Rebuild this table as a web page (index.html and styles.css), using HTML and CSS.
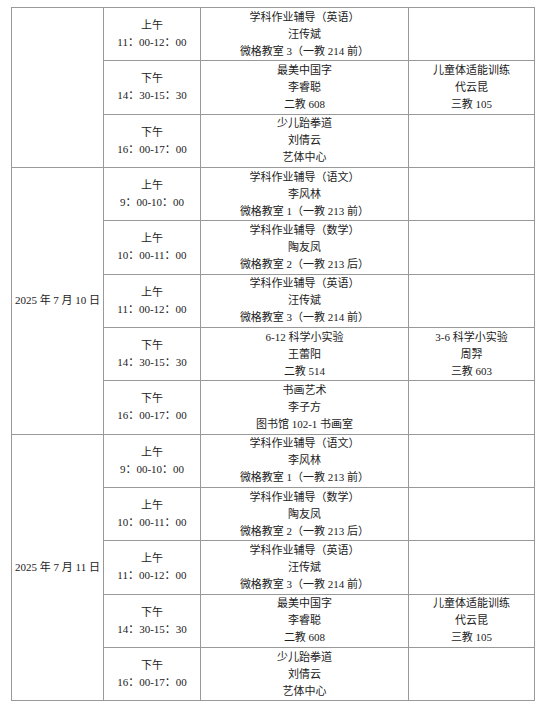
FILE: index.html
```html
<!DOCTYPE html>
<html lang="zh-CN">
<head>
<meta charset="utf-8">
<link rel="stylesheet" href="styles.css">
</head>
<body>
<table class="schedule">
  <colgroup>
    <col class="c-date"><col class="c-time"><col class="c-course"><col class="c-course2">
  </colgroup>
  <tbody>
    <tr>
      <td rowspan="3"></td>
      <td>上午<br>11：00-12：00</td>
      <td>学科作业辅导（英语）<br>汪传斌<br>微格教室 3（一教 214 前）</td>
      <td></td>
    </tr>
    <tr>
      <td>下午<br>14：30-15：30</td>
      <td>最美中国字<br>李睿聪<br>二教 608</td>
      <td>儿童体适能训练<br>代云昆<br>三教 105</td>
    </tr>
    <tr>
      <td>下午<br>16：00-17：00</td>
      <td>少儿跆拳道<br>刘倩云<br>艺体中心</td>
      <td></td>
    </tr>

    <tr>
      <td rowspan="5">2025 年 7 月 10 日</td>
      <td>上午<br>9：00-10：00</td>
      <td>学科作业辅导（语文）<br>李风林<br>微格教室 1（一教 213 前）</td>
      <td></td>
    </tr>
    <tr>
      <td>上午<br>10：00-11：00</td>
      <td>学科作业辅导（数学）<br>陶友凤<br>微格教室 2（一教 213 后）</td>
      <td></td>
    </tr>
    <tr>
      <td>上午<br>11：00-12：00</td>
      <td>学科作业辅导（英语）<br>汪传斌<br>微格教室 3（一教 214 前）</td>
      <td></td>
    </tr>
    <tr>
      <td>下午<br>14：30-15：30</td>
      <td>6-12 科学小实验<br>王蕾阳<br>二教 514</td>
      <td>3-6 科学小实验<br>周羿<br>三教 603</td>
    </tr>
    <tr>
      <td>下午<br>16：00-17：00</td>
      <td>书画艺术<br>李子方<br>图书馆 102-1 书画室</td>
      <td></td>
    </tr>

    <tr>
      <td rowspan="5">2025 年 7 月 11 日</td>
      <td>上午<br>9：00-10：00</td>
      <td>学科作业辅导（语文）<br>李风林<br>微格教室 1（一教 213 前）</td>
      <td></td>
    </tr>
    <tr>
      <td>上午<br>10：00-11：00</td>
      <td>学科作业辅导（数学）<br>陶友凤<br>微格教室 2（一教 213 后）</td>
      <td></td>
    </tr>
    <tr>
      <td>上午<br>11：00-12：00</td>
      <td>学科作业辅导（英语）<br>汪传斌<br>微格教室 3（一教 214 前）</td>
      <td></td>
    </tr>
    <tr>
      <td>下午<br>14：30-15：30</td>
      <td>最美中国字<br>李睿聪<br>二教 608</td>
      <td>儿童体适能训练<br>代云昆<br>三教 105</td>
    </tr>
    <tr>
      <td>下午<br>16：00-17：00</td>
      <td>少儿跆拳道<br>刘倩云<br>艺体中心</td>
      <td></td>
    </tr>
  </tbody>
</table>
</body>
</html>
```

FILE: styles.css
```css
html, body {
  margin: 0;
  padding: 0;
  background: #ffffff;
}

body {
  padding: 7px 0 0 11px;
  font-family: "Liberation Serif", "Noto Sans CJK SC", serif;
  font-size: 11px;
  line-height: 17px;
  color: #222222;
}

.schedule {
  border-collapse: collapse;
  table-layout: fixed;
  width: 523px;
}

.c-date { width: 92px; }
.c-time { width: 97px; }
.c-course { width: 208px; }
.c-course2 { width: 126px; }

.schedule tr {
  height: 53.33px;
}

.schedule td {
  border: 1px solid #999999;
  padding: 0;
  text-align: center;
  vertical-align: middle;
  white-space: nowrap;
}
```
